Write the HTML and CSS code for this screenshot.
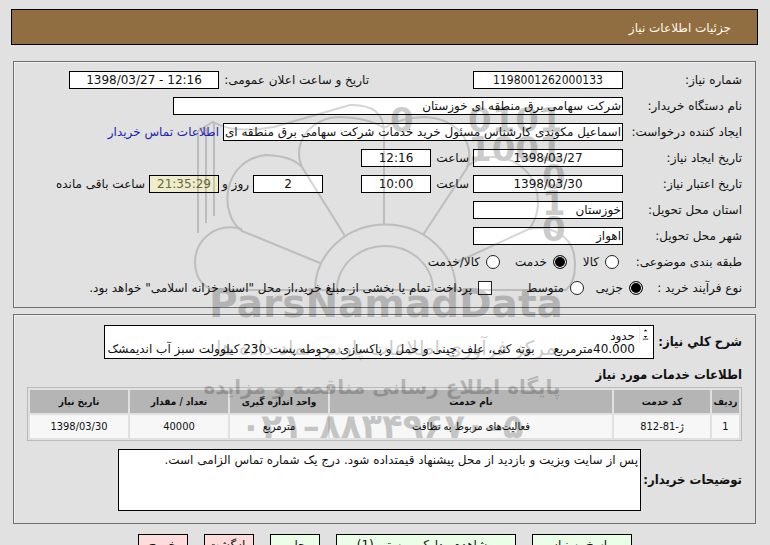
FILE: index.html
```html
<!DOCTYPE html>
<html lang="fa" dir="rtl">
<head>
<meta charset="utf-8">
<title>جزئیات اطلاعات نیاز</title>
<link rel="stylesheet" href="styles.css">
</head>
<body>
<header class="title-bar"><h1>جزئیات اطلاعات نیاز</h1></header>
<main>
<form>
<fieldset class="panel details">
  <div class="row">
    <label class="name" for="need-no">شماره نیاز:</label>
    <input class="box medium center code" id="need-no" value="1198001262000133" readonly>
    <label class="announce" for="announce">تاریخ و ساعت اعلان عمومی:</label>
    <input class="box medium center" id="announce" dir="ltr" value="1398/03/27 - 12:16" readonly>
  </div>
  <div class="row">
    <label class="name" for="buyer">نام دستگاه خریدار:</label>
    <input class="box wide" id="buyer" value="شرکت سهامی برق منطقه ای خوزستان" readonly>
  </div>
  <div class="row">
    <label class="name" for="creator">ایجاد کننده درخواست:</label>
    <input class="box large" id="creator" value="اسماعیل مکوندی کارشناس مسئول خرید خدمات شرکت سهامی برق منطقه ای خوزستان" readonly>
    <a href="#contact">اطلاعات تماس خریدار</a>
  </div>
  <div class="row">
    <label class="name" for="created">تاریخ ایجاد نیاز:</label>
    <input class="box medium center" id="created" value="1398/03/27" readonly>
    <label class="hour" for="created-hour">ساعت</label>
    <input class="box small center" id="created-hour" value="12:16" readonly>
  </div>
  <div class="row">
    <label class="name" for="valid">تاریخ اعتبار نیاز:</label>
    <input class="box medium center" id="valid" value="1398/03/30" readonly>
    <label class="hour" for="valid-hour">ساعت</label>
    <input class="box small center" id="valid-hour" value="10:00" readonly>
    <input class="box small center days" id="days" value="2" readonly>
    <label class="day" for="days">روز و</label>
    <input class="box small center timer" id="timer" value="21:35:29" readonly>
    <label for="timer">ساعت باقی مانده</label>
  </div>
  <div class="row">
    <label class="name" for="province">استان محل تحویل:</label>
    <input class="box medium" id="province" value="خوزستان" readonly>
  </div>
  <div class="row">
    <label class="name" for="city">شهر محل تحویل:</label>
    <input class="box medium" id="city" value="اهواز" readonly>
  </div>
  <div class="row" role="radiogroup" aria-labelledby="cat">
    <span class="name" id="cat">طبقه بندی موضوعی:</span>
    <label class="choice goods"><input type="radio" name="cat"> کالا</label>
    <label class="choice service"><input type="radio" name="cat" checked> خدمت</label>
    <label class="choice"><input type="radio" name="cat"> کالا/خدمت</label>
  </div>
  <div class="row" role="radiogroup" aria-labelledby="process">
    <span class="name short" id="process">نوع فرآیند خرید :</span>
    <label class="choice minor"><input type="radio" name="process" checked> جزیی</label>
    <label class="choice average"><input type="radio" name="process"> متوسط</label>
    <label class="choice"><input type="checkbox"> پرداخت تمام یا بخشی از مبلغ خرید،از محل "اسناد خزانه اسلامی" خواهد بود.</label>
  </div>
</fieldset>

<fieldset class="panel services">
  <div class="text-row summary">
    <label for="summary">شرح کلي نياز:</label>
    <div class="area">
      <svg class="spin" viewBox="0 0 12 16" aria-hidden="true"><path d="M6 2l2 2H4zM3 12h6v1H3zM4 9h4l-2 2z"/></svg>
      <textarea id="summary" readonly>حدود
40.000مترمربع     بوته کنی، علف چینی و حمل و پاکسازی محوطه پست 230 کیلوولت سبز آب اندیمشک</textarea>
    </div>
  </div>
  <h2>اطلاعات خدمات مورد نیاز</h2>
  <table>
    <colgroup><col class="c-row"><col class="c-code"><col><col class="c-unit"><col class="c-unit"><col class="c-unit"></colgroup>
    <thead><tr><th>ردیف</th><th>کد خدمت</th><th>نام خدمت</th><th>واحد اندازه گیری</th><th>تعداد / مقدار</th><th>تاریخ نیاز</th></tr></thead>
    <tbody><tr><td>1</td><td>ژ-81-812</td><td>فعالیت‌های مربوط به نظافت</td><td>مترمربع</td><td>40000</td><td>1398/03/30</td></tr></tbody>
  </table>
  <div class="text-row notes">
    <label for="notes">توضیحات خریدار:</label>
    <textarea id="notes" readonly>پس از سایت ویزیت و بازدید از محل پیشنهاد قیمتداده شود. درج یک شماره تماس الزامی است.</textarea>
  </div>
</fieldset>

<div class="actions">
  <button class="go w100" type="button">پاسخ به نیاز</button>
  <button class="go w180" type="button">مشاهده مدارک پیوستی (1)</button>
  <button class="go" type="button">چاپ</button>
  <button class="leave" type="button">بازگشت</button>
  <button class="leave" type="button">خروج</button>
</div>
</form>
</main>

<svg class="watermark" viewBox="0 0 400 350" direction="ltr" aria-hidden="true">
  <g class="lines">
    <path d="M14 133V31M22 123V28M30 116V23M14 31L29 22Q50 34 90 27L166 5Q200 4 200 32V125"/>
    <path d="M131 190A70 65 0 0 1 272 190M153 190A48 44 0 0 1 249 190"/>
    <path d="M161 136L118 67C107 42 128 17 156 17Q185 18 200 28Q215 18 240 17C272 18 292 42 283 68L239 135"/>
    <path d="M136 163L58 131C34 114 38 60 82 55Q108 56 118 67M283 66Q300 54 318 58C352 64 364 105 345 129L271 163"/>
    <path d="M58 129C31 122 11 140 11 163Q12 185 30 190H382Q394 179 390 154C386 135 366 125 345 129"/>
  </g>
  <g class="digits">
    <text x="206" y="32">0</text><text x="284" y="32">0101</text><text x="284" y="61">1001</text>
    <text x="358" y="89">0</text><text x="358" y="115">1</text><text x="358" y="141">0</text>
  </g>
  <text class="brand" x="202" y="217">ParsNamadData</text>
  <text class="script" x="202" y="255">مرکز فرآوری اطلاعات پارس نماد داده ها</text>
  <text class="tagline" x="198" y="294">پایگاه اطلاع رسانی مناقصه و مزایده</text>
  <text class="phone" x="198" y="338">۰۲۱–۸۸۳۴۹۶۷۰–۵</text>
</svg>
</body>
</html>
```
FILE: styles.css
```css
* { box-sizing: border-box; }

body {
  position: relative;
  margin: 0;
  padding: 9px 12px 0 11px;
  background: #e1e1e1;
  color: #111;
  font: 12px/16px "DejaVu Sans", sans-serif;
}

input, textarea, button { font: inherit; color: inherit; }

h1, h2 { margin: 0; }

.title-bar {
  padding: 10px 26px 8px;
  border: 1px solid #000;
  background: #906e42;
  color: #fff8e8;
}
.title-bar h1 { font-size: 12px; line-height: 16px; font-weight: normal; }

.panel {
  min-width: 0;
  margin: 0 2px;
  padding: 0 13px;
  border: 1px solid #707070;
  box-shadow: inset 1px 1px #f0f0f0;
}
.details { margin-top: 16px; padding-top: 5px; padding-bottom: 6px; }
.services { margin-top: 6px; padding-top: 10px; padding-bottom: 12px; }

.row { display: flex; align-items: center; height: 26px; gap: 4px; white-space: nowrap; }
.name { flex: none; width: 115px; }
.name.short { width: 95px; }

.box {
  flex: none;
  height: 18px;
  padding: 0 1px;
  border: 1px solid #000;
  border-radius: 0;
  background: #fff;
}
.center { text-align: center; }
.code { font-family: "DejaVu Sans Condensed", "DejaVu Sans", sans-serif; }
.small { width: 70px; }
.medium { width: 150px; }
.large { width: 400px; }
.wide { width: 450px; }
.announce { width: 146px; margin-right: 100px; }
.hour { width: 34px; }
.day { width: 26px; }
.days { margin-right: 34px; }
.timer { background: #eeeccb; color: #666644; }

a { color: #2222b0; text-decoration: none; }

.choice { display: flex; align-items: center; gap: 6px; }
.choice input {
  flex: none;
  appearance: none;
  width: 14px;
  height: 14px;
  margin: 0;
  border: 1px solid #222;
  background: #fff;
}
.choice input[type="radio"] { border-radius: 50%; }
.choice input[type="radio"]:checked { background: #000; box-shadow: inset 0 0 0 1px #fff; }
.goods { width: 48px; margin-right: 4px; }
.service { width: 63px; }
.minor { width: 55px; }
.average { width: 88px; }

.text-row { display: flex; align-items: center; }
.text-row label {
  flex: none;
  font: bold 13px/16px "DejaVu Sans Condensed", "DejaVu Sans", sans-serif;
  white-space: nowrap;
}
.summary label { width: 88px; }
.notes label { width: 101px; }
.area {
  display: flex;
  flex: 1;
  height: 34px;
  margin-left: 77px;
  border: 1px solid #000;
  background: #fff;
}
.spin { flex: none; width: 12px; height: 16px; margin: 1px 2px; border-left: 1px solid #eee; }
textarea { display: block; resize: none; overflow: hidden; border-radius: 0; background: #fff; }
.area textarea { flex: 1; min-width: 0; padding: 4px 2px 0; border: 0; line-height: 13px; white-space: pre; }
.notes textarea { flex: 1; height: 62px; margin-left: 91px; padding: 2px; border: 1px solid #000; }

h2 {
  margin: 8px 0 4px;
  font: bold 13px/16px "DejaVu Sans Condensed", "DejaVu Sans", sans-serif;
}

table {
  width: 100%;
  margin-bottom: 8px;
  table-layout: fixed;
  border: 1px solid #b9b9b9;
  border-spacing: 2px;
  font: 11px/14px "DejaVu Sans Condensed", "DejaVu Sans", sans-serif;
}
th, td { height: 23px; padding: 0; text-align: center; white-space: nowrap; }
th { background: #b5b5b5; font-size: 10px; }
td { background: #f7f7f7; }
.c-row { width: 27px; }
.c-code { width: 96px; }
.c-unit { width: 98px; }

.actions { display: flex; justify-content: center; gap: 16px; margin-top: 10px; }
.actions button { width: 50px; height: 22px; padding: 0; border: 1px solid #000; white-space: nowrap; }
.actions .w100 { width: 100px; }
.actions .w180 { width: 180px; }
.go { background: #ebffe8; }
.leave { background: #ffdcdc; }

.watermark {
  position: absolute;
  top: 100px;
  left: 50%;
  width: 400px;
  height: 350px;
  margin-left: -201px;
  overflow: visible;
  opacity: .2;
  pointer-events: none;
}
.lines { fill: none; stroke: #333; stroke-width: 2; }
.digits { font: bold 34px "DejaVu Sans", sans-serif; }
.brand, .script, .tagline, .phone { text-anchor: middle; }
.brand { font: bold 39px "DejaVu Sans", sans-serif; }
.script { font: 20px "DejaVu Sans", sans-serif; }
.tagline { font: bold 20px "DejaVu Sans", sans-serif; }
.phone { font: bold 34px "DejaVu Sans", sans-serif; }
```
